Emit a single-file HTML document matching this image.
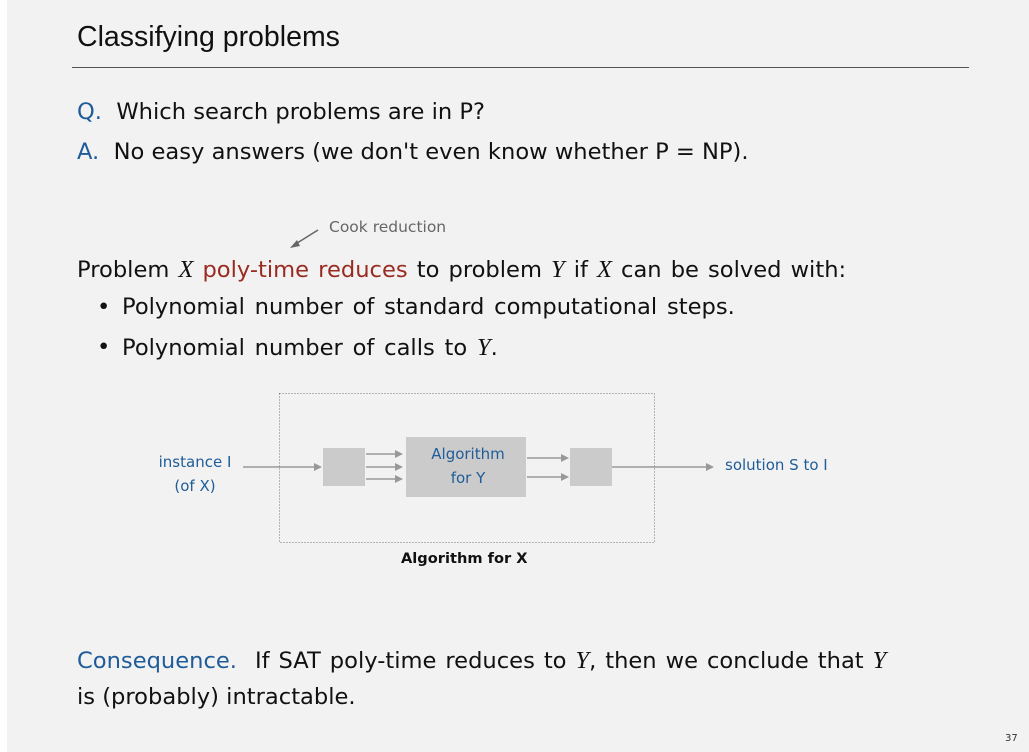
<!DOCTYPE html>
<html><head><meta charset="utf-8"><style>
body{margin:0;width:1029px;height:752px;background:#f2f2f2;position:relative;overflow:hidden;font-family:"DejaVu Sans","Liberation Sans",sans-serif;color:#111}
.t{position:absolute;white-space:nowrap}
.b{color:#1f5c99}
.r{color:#9a2b22}
i{font-family:"Liberation Serif",serif;font-size:1.08em}
.m{font-size:22.6px}
</style></head><body>
<div style="position:absolute;left:0;top:0;width:7px;height:752px;background:#fff"></div>
<div class="t" style="left:77px;top:21px;font-size:28.5px;font-family:'Liberation Sans',sans-serif">Classifying problems</div>
<div style="position:absolute;left:72px;top:67px;width:897px;height:1px;background:#555"></div>
<div class="t m" style="left:77px;top:99px"><span class="b">Q.</span>&nbsp; Which search problems are in P?</div>
<div class="t m" style="left:77px;top:139px"><span class="b">A.</span>&nbsp; No easy answers (we don't even know whether P = NP).</div>
<div class="t" style="left:329px;top:218px;font-size:15.5px;color:#666">Cook reduction</div>
<svg style="position:absolute;left:0;top:0" width="1029" height="752">
<line x1="318" y1="230" x2="294" y2="245" stroke="#666" stroke-width="1.5"/>
<polygon points="290,248 297,240 300,246" fill="#666"/>
<rect x="279.5" y="393.5" width="375" height="149" fill="none" stroke="#777" stroke-dasharray="1,2"/>
<rect x="323" y="448" width="42" height="38" fill="#cbcbcb"/>
<rect x="406" y="437" width="120" height="60" fill="#cbcbcb"/>
<rect x="570" y="448" width="42" height="38" fill="#cbcbcb"/>
<g stroke="#999" stroke-width="1.5">
<line x1="243" y1="467" x2="316" y2="467"/>
<line x1="366" y1="454" x2="397" y2="454"/>
<line x1="366" y1="467" x2="397" y2="467"/>
<line x1="366" y1="479" x2="397" y2="479"/>
<line x1="527" y1="458" x2="563" y2="458"/>
<line x1="527" y1="477" x2="563" y2="477"/>
<line x1="612" y1="467" x2="707" y2="467"/>
</g>
<g fill="#999">
<polygon points="322,467 314,463 314,471"/>
<polygon points="403,454 395,450 395,458"/>
<polygon points="403,467 395,463 395,471"/>
<polygon points="403,479 395,475 395,483"/>
<polygon points="569,458 561,454 561,462"/>
<polygon points="569,477 561,473 561,481"/>
<polygon points="714,467 706,463 706,471"/>
</g>
</svg>
<div class="t m" style="left:77px;top:256px;word-spacing:1.9px">Problem <i>X</i> <span class="r">poly-time reduces</span> to problem <i>Y</i> if <i>X</i> can be solved with:</div>
<div class="t m" style="left:97px;top:294px">•</div>
<div class="t m" style="left:122px;top:294px;word-spacing:2.6px">Polynomial number of standard computational steps.</div>
<div class="t m" style="left:97px;top:334px">•</div>
<div class="t m" style="left:122px;top:334px;word-spacing:2.6px">Polynomial number of calls to <i>Y</i>.</div>
<div class="t b" style="left:155px;top:450px;font-size:15px;text-align:center;line-height:24px;width:80px">instance I<br>(of X)</div>
<div class="t b" style="left:406px;top:442px;width:124px;font-size:15px;text-align:center;line-height:24px">Algorithm<br>for Y</div>
<div class="t b" style="left:725px;top:456px;font-size:15px">solution S to I</div>
<div class="t" style="left:401px;top:550px;font-size:14.6px;font-weight:bold">Algorithm for X</div>
<div class="t m" style="left:77px;top:647px;word-spacing:1.8px"><span class="b">Consequence.</span>&nbsp; If SAT poly-time reduces to <i>Y</i>, then we conclude that <i>Y</i></div>
<div class="t m" style="left:77px;top:684px">is (probably) intractable.</div>
<div class="t" style="left:1005px;top:733px;font-size:10px;color:#333">37</div>
</body></html>
